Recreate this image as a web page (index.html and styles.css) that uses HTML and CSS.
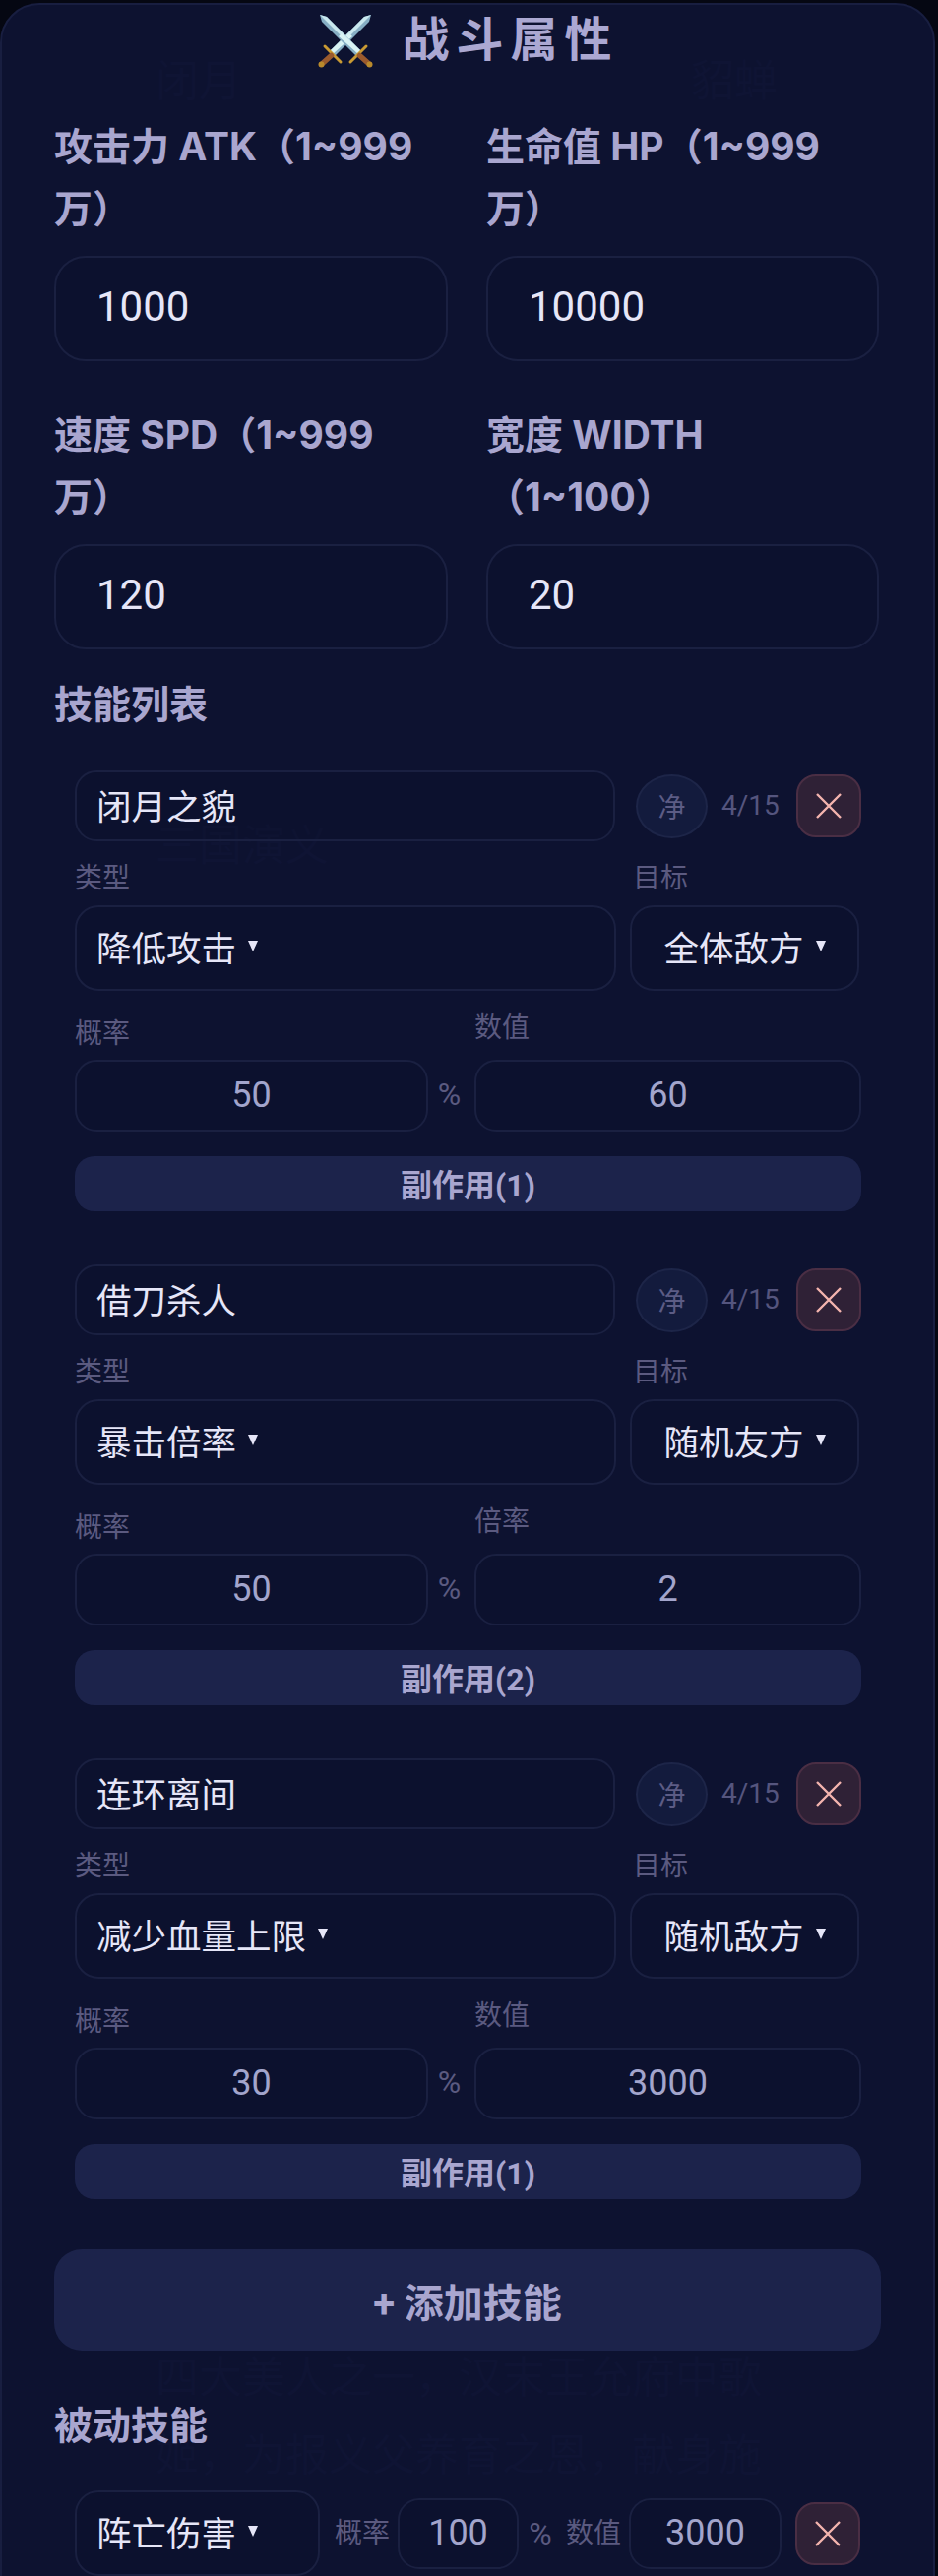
FILE: index.html
```html
<!DOCTYPE html>
<html lang="zh-CN">
<head>
<meta charset="utf-8">
<title>战斗属性</title>
<link rel="stylesheet" href="styles.css">
</head>
<body>
<main class="card">
  <div class="ghost" aria-hidden="true">
    <div class="ghost-line g1"><span>闭月</span><span>貂蝉</span></div>
    <div class="ghost-line g2">三国演义</div>
    <div class="ghost-line g3">四大美人之一，汉末王允府中歌</div>
    <div class="ghost-line g4">姬，为报义父养育之恩，献身施</div>
  </div>
  <div class="content">
    <h2 class="title">
      <svg class="swords" viewBox="0 0 56 56" aria-hidden="true">
        <defs>
          <g id="sword">
            <path d="M2 2 L9 4 L44 39 L39 44 L4 9 Z" fill="#86aec4"/>
            <path d="M2 2 L9 4 L44 39 L41.5 41.5 Z" fill="#c9e8ee"/>
            <path d="M24 21 L44 39 L41 42 L21 24 Z" fill="#d9f3f4"/>
            <path d="M33 50 L49 34" stroke="#c99a33" stroke-width="3" stroke-linecap="round"/>
            <path d="M42.5 43.5 L52 52" stroke="#9a5a2d" stroke-width="5.5" stroke-linecap="round"/>
            <circle cx="52.5" cy="52.5" r="3" fill="#b98a2c"/>
          </g>
        </defs>
        <use href="#sword" transform="translate(56 0) scale(-1 1)"/>
        <use href="#sword"/>
      </svg>
      <span>战斗属性</span>
    </h2>

    <div class="stats">
      <label class="stat">
        <span class="stat-label">攻击力 ATK（1~999<br>万）</span>
        <input class="stat-input" value="1000">
      </label>
      <label class="stat">
        <span class="stat-label">生命值 HP（1~999<br>万）</span>
        <input class="stat-input" value="10000">
      </label>
      <label class="stat">
        <span class="stat-label">速度 SPD（1~999<br>万）</span>
        <input class="stat-input" value="120">
      </label>
      <label class="stat">
        <span class="stat-label">宽度 WIDTH<br>（1~100）</span>
        <input class="stat-input" value="20">
      </label>
    </div>

    <h3 class="section-title skills-title">技能列表</h3>

    <section class="skill">
      <div class="skill-head">
        <input class="name-input" value="闭月之貌">
        <button class="clean">净</button>
        <span class="count">4/15</span>
        <button class="remove"><svg viewBox="0 0 26 26"><path d="M1 1 L25 25 M25 1 L1 25"/></svg></button>
      </div>
      <div class="pick-grid">
        <div><div class="small-label">类型</div><div class="select">降低攻击<i class="caret"></i></div></div>
        <div><div class="small-label">目标</div><div class="select select-center">全体敌方<i class="caret"></i></div></div>
      </div>
      <div class="num-row">
        <div class="num-prob"><div class="small-label">概率</div><input class="num-input" value="50"></div>
        <span class="pct">%</span>
        <div class="num-val"><div class="small-label">数值</div><input class="num-input" value="60"></div>
      </div>
      <button class="side-btn">副作用(1)</button>
    </section>

    <section class="skill">
      <div class="skill-head">
        <input class="name-input" value="借刀杀人">
        <button class="clean">净</button>
        <span class="count">4/15</span>
        <button class="remove"><svg viewBox="0 0 26 26"><path d="M1 1 L25 25 M25 1 L1 25"/></svg></button>
      </div>
      <div class="pick-grid">
        <div><div class="small-label">类型</div><div class="select">暴击倍率<i class="caret"></i></div></div>
        <div><div class="small-label">目标</div><div class="select select-center">随机友方<i class="caret"></i></div></div>
      </div>
      <div class="num-row">
        <div class="num-prob"><div class="small-label">概率</div><input class="num-input" value="50"></div>
        <span class="pct">%</span>
        <div class="num-val"><div class="small-label">倍率</div><input class="num-input" value="2"></div>
      </div>
      <button class="side-btn">副作用(2)</button>
    </section>

    <section class="skill">
      <div class="skill-head">
        <input class="name-input" value="连环离间">
        <button class="clean">净</button>
        <span class="count">4/15</span>
        <button class="remove"><svg viewBox="0 0 26 26"><path d="M1 1 L25 25 M25 1 L1 25"/></svg></button>
      </div>
      <div class="pick-grid">
        <div><div class="small-label">类型</div><div class="select">减少血量上限<i class="caret"></i></div></div>
        <div><div class="small-label">目标</div><div class="select select-center">随机敌方<i class="caret"></i></div></div>
      </div>
      <div class="num-row">
        <div class="num-prob"><div class="small-label">概率</div><input class="num-input" value="30"></div>
        <span class="pct">%</span>
        <div class="num-val"><div class="small-label">数值</div><input class="num-input" value="3000"></div>
      </div>
      <button class="side-btn">副作用(1)</button>
    </section>

    <button class="add-btn">+ 添加技能</button>

    <h3 class="section-title passive-title">被动技能</h3>

    <div class="passive">
      <div class="select passive-select">阵亡伤害<i class="caret"></i></div>
      <span class="small-label inline-label">概率</span>
      <input class="num-input passive-prob" value="100">
      <span class="inline-pct">%</span>
      <span class="small-label inline-label">数值</span>
      <input class="num-input passive-val" value="3000">
      <button class="remove"><svg viewBox="0 0 26 26"><path d="M1 1 L25 25 M25 1 L1 25"/></svg></button>
    </div>
  </div>
</main>
</body>
</html>
```
FILE: styles.css
```css
* { box-sizing: border-box; }

html, body {
  margin: 0;
  height: 2618px;
  overflow: hidden;
  background: #050712;
}

body, input, button {
  font-family: Roboto, "Noto Sans CJK SC", sans-serif;
}

input, button {
  margin: 0;
  outline: none;
}

.card {
  position: relative;
  width: 950px;
  min-height: 2700px;
  margin-top: 3px;
  padding: 0 53px;
  background: #0d1230;
  border: 2px solid #181e40;
  border-radius: 40px 40px 0 0;
}

.ghost {
  position: absolute;
  inset: 0;
  font-family: "Noto Sans CJK SC", sans-serif;
  font-size: 44px;
  color: #0f1434;
}

.ghost-line {
  position: absolute;
  left: 156px;
  width: 632px;
  line-height: 60px;
  white-space: nowrap;
}

.g1 { top: 44px; display: flex; justify-content: space-between; }
.g2 { top: 821px; }
.g3 { top: 2378px; }
.g4 { top: 2457px; }

.content {
  position: relative;
}

.title {
  display: flex;
  justify-content: center;
  align-items: center;
  gap: 29px;
  height: 72px;
  margin: 0;
  padding-left: 2px;
  font-size: 48px;
  line-height: 72px;
  font-weight: 700;
  letter-spacing: 7px;
  color: #aba8d2;
}

.swords {
  width: 56px;
  height: 56px;
}

.stats {
  display: grid;
  grid-template-columns: 400px 399px;
  column-gap: 39px;
  row-gap: 43px;
  margin-top: 40px;
}

.stat {
  display: block;
}

.stat-label {
  display: block;
  font-family: Inter, "Noto Sans CJK SC", sans-serif;
  font-size: 39px;
  line-height: 63px;
  font-weight: 700;
  color: #a9a6cf;
  white-space: nowrap;
}

.stat-input {
  display: block;
  width: 100%;
  height: 107px;
  margin-top: 17px;
  padding: 0 41px 5px;
  font-size: 42px;
  color: #e6e6f8;
  background: rgba(10, 14, 40, 0.2);
  border: 2px solid #1a2041;
  border-radius: 32px;
}

.section-title {
  margin: 0;
  font-family: "Noto Sans CJK SC", sans-serif;
  font-size: 39px;
  line-height: 65px;
  font-weight: 700;
  color: #a9a6cf;
}

.skills-title { margin-top: 21px; margin-bottom: 37px; }
.passive-title { margin-top: 41px; margin-bottom: 36px; }

.skill {
  margin: 0 20px 54px 21px;
}

.skill:last-of-type { margin-bottom: 51px; }

.skill-head {
  display: flex;
  align-items: center;
  height: 72px;
}

.name-input {
  flex: 1;
  min-width: 0;
  height: 72px;
  padding: 0 20px 4px;
  font-size: 35.5px;
  color: #e6e6f8;
  background: rgba(10, 14, 40, 0.2);
  border: 2px solid #1a2041;
  border-radius: 22px;
}

.clean {
  width: 73px;
  height: 65px;
  margin-left: 21px;
  padding: 0;
  font-size: 28px;
  color: #5c5c85;
  background: #131b3d;
  border: 2px solid #1d2548;
  border-radius: 50%;
}

.count {
  width: 62px;
  margin-left: 14px;
  font-size: 28px;
  line-height: 40px;
  color: #55557e;
  white-space: nowrap;
}

.remove {
  display: flex;
  align-items: center;
  justify-content: center;
  flex: none;
  width: 66px;
  height: 64px;
  margin-left: 14px;
  padding: 0;
  background: #2f2136;
  border: 2px solid #4a2e44;
  border-radius: 20px;
}

.remove svg {
  width: 26px;
  height: 26px;
}

.remove path {
  fill: none;
  stroke: #f4b4ae;
  stroke-width: 2.4;
}

.pick-grid {
  display: grid;
  grid-template-columns: 550px 233px;
  column-gap: 14px;
  margin-top: 18px;
}

.small-label {
  font-size: 28px;
  line-height: 40px;
  color: #5b5a80;
}

.pick-grid .small-label { margin-bottom: 7px; }
.pick-grid > div:last-child .small-label { margin-left: 3px; }

.select {
  display: flex;
  align-items: center;
  height: 87px;
  padding: 0 20px 4px;
  font-size: 35.5px;
  color: #e6e6f8;
  background: rgba(10, 14, 40, 0.2);
  border: 2px solid #1a2041;
  border-radius: 24px;
}

.select-center {
  justify-content: center;
  padding: 0 0 4px;
}

.caret {
  width: 0;
  height: 0;
  margin-left: 12px;
  border-left: 5.5px solid transparent;
  border-right: 5.5px solid transparent;
  border-top: 11px solid #e6e6f8;
}

.num-row {
  display: flex;
  align-items: flex-end;
  margin-top: 18px;
}

.num-prob { width: 359px; }
.num-val { flex: 1; }
.num-prob .small-label { margin-bottom: 6px; }
.num-val .small-label { margin-bottom: 12px; }

.num-input {
  display: block;
  width: 100%;
  height: 73px;
  padding: 0 0 2px;
  font-size: 36px;
  text-align: center;
  color: #a3a5cc;
  background: rgba(10, 14, 40, 0.2);
  border: 2px solid #1a2041;
  border-radius: 22px;
}

.pct {
  width: 47px;
  height: 73px;
  padding-right: 4px;
  font-size: 32px;
  line-height: 71px;
  text-align: center;
  color: #5b5a80;
}

.side-btn {
  display: block;
  width: 100%;
  height: 56px;
  margin-top: 25px;
  padding: 0 0 2px;
  font-size: 32px;
  font-weight: 700;
  color: #a9a6cf;
  background: #1c234b;
  border: 0;
  border-radius: 20px;
}

.add-btn {
  display: block;
  width: 100%;
  height: 103px;
  padding: 0;
  font-size: 40px;
  font-weight: 700;
  color: #a9a6cf;
  background: #1c234b;
  border: 0;
  border-radius: 28px;
}

.passive {
  display: flex;
  align-items: center;
  margin-left: 21px;
  width: 797px;
}

.passive-select {
  flex: none;
  width: 249px;
}

.inline-label {
  flex: none;
}

.passive-select + .inline-label { margin-left: 15px; }

.passive-prob {
  flex: none;
  width: 123px;
  height: 72px;
  margin-left: 8px;
}

.inline-pct {
  flex: none;
  width: 48px;
  padding-right: 4px;
  font-size: 32px;
  line-height: 40px;
  text-align: center;
  color: #5b5a80;
}

.passive-val {
  flex: none;
  width: 155px;
  height: 72px;
  margin-left: 8px;
}
```
